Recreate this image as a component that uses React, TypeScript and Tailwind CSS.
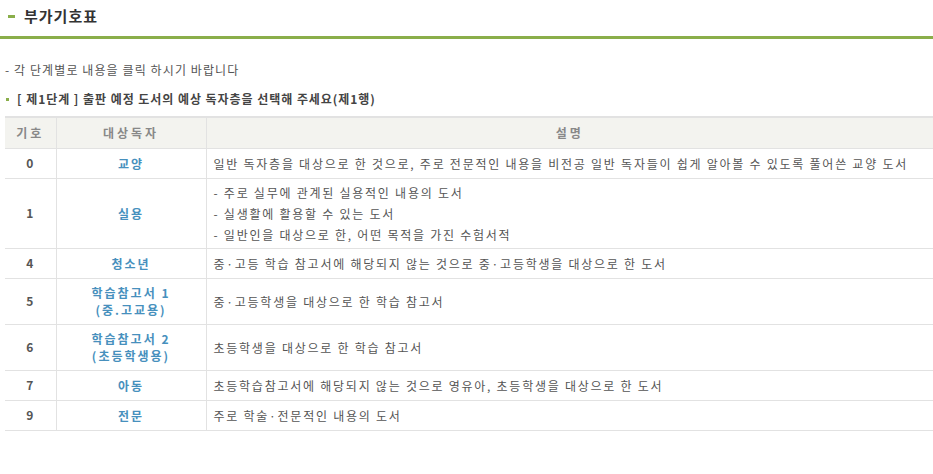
import React from 'react';

type Row = { code: string; target: string[]; desc: string[] };

const ROWS: Row[] = [
  { code: '0', target: ['교양'], desc: ['일반 독자층을 대상으로 한 것으로, 주로 전문적인 내용을 비전공 일반 독자들이 쉽게 알아볼 수 있도록 풀어쓴 교양 도서'] },
  { code: '1', target: ['실용'], desc: ['- 주로 실무에 관계된 실용적인 내용의 도서', '- 실생활에 활용할 수 있는 도서', '- 일반인을 대상으로 한, 어떤 목적을 가진 수험서적'] },
  { code: '4', target: ['청소년'], desc: ['중·고등 학습 참고서에 해당되지 않는 것으로 중·고등학생을 대상으로 한 도서'] },
  { code: '5', target: ['학습참고서 1', '(중.고교용)'], desc: ['중·고등학생을 대상으로 한 학습 참고서'] },
  { code: '6', target: ['학습참고서 2', '(초등학생용)'], desc: ['초등학생을 대상으로 한 학습 참고서'] },
  { code: '7', target: ['아동'], desc: ['초등학습참고서에 해당되지 않는 것으로 영유아, 초등학생을 대상으로 한 도서'] },
  { code: '9', target: ['전문'], desc: ['주로 학술·전문적인 내용의 도서'] },
];

const font = { fontFamily: '"Noto Sans CJK KR", "Noto Sans", sans-serif' };

export default function App() {
  return (
    <div className="w-[933px] h-[474px] bg-white text-[#555] overflow-hidden" style={font}>
      {/* title bar */}
      <div className="h-[39px] flex items-center pl-2 border-b-[3px] border-[#8aae4a]">
        <span className="w-[7px] h-[3px] bg-[#8aae4a] mr-[9px] mb-[3px]" />
        <h1 className="text-[15px] font-bold text-[#333] tracking-[1px] mb-[4px]">부가기호표</h1>
      </div>

      <p className="mt-[22px] ml-[5px] text-[12px] tracking-[1.1px] leading-[18px]">- 각 단계별로 내용을 클릭 하시기 바랍니다</p>

      <div className="mt-[11px] ml-[6px] flex items-center">
        <span className="w-[3px] h-[3px] bg-[#8aae4a] mr-[8px]" />
        <span className="text-[12px] font-bold text-[#444] tracking-[0.95px] leading-[18px]">[ 제1단계 ] 출판 예정 도서의 예상 독자층을 선택해 주세요(제1행)</span>
      </div>

      <table className="ml-[5px] mt-[8px] w-[928px] border-collapse text-[12px] tracking-[1px]">
        <thead>
          <tr className="bg-[#f3f3ef] border-t-[2px] border-[#e2e2e2] h-[31px]">
            <th className="w-[51px] font-bold text-[#888] tracking-[3px] border-b border-[#e2e2e2] border-r">기호</th>
            <th className="w-[150px] font-bold text-[#888] tracking-[3px] border-b border-[#e2e2e2] border-r">대상독자</th>
            <th className="font-bold text-[#888] tracking-[3px] border-b border-[#e2e2e2]">설명</th>
          </tr>
        </thead>
        <tbody>
          {ROWS.map(r => (
            <tr key={r.code} className={r.desc.length > 1 ? 'h-[70px]' : r.target.length > 1 ? 'h-[46px]' : 'h-[30px]'}>
              <td className="text-center font-bold text-[#555] border-b border-r border-[#e2e2e2]">{r.code}</td>
              <td className="text-center font-bold text-[#4790bd] tracking-[2px] border-b border-r border-[#e2e2e2] leading-[17px]">
                {r.target.map(t => <div key={t}>{t}</div>)}
              </td>
              <td className="pl-[7px] border-b border-[#e2e2e2] leading-[21px] tracking-[1.75px]">
                {r.desc.map(d => <div key={d}>{d}</div>)}
              </td>
            </tr>
          ))}
        </tbody>
      </table>
    </div>
  );
}
